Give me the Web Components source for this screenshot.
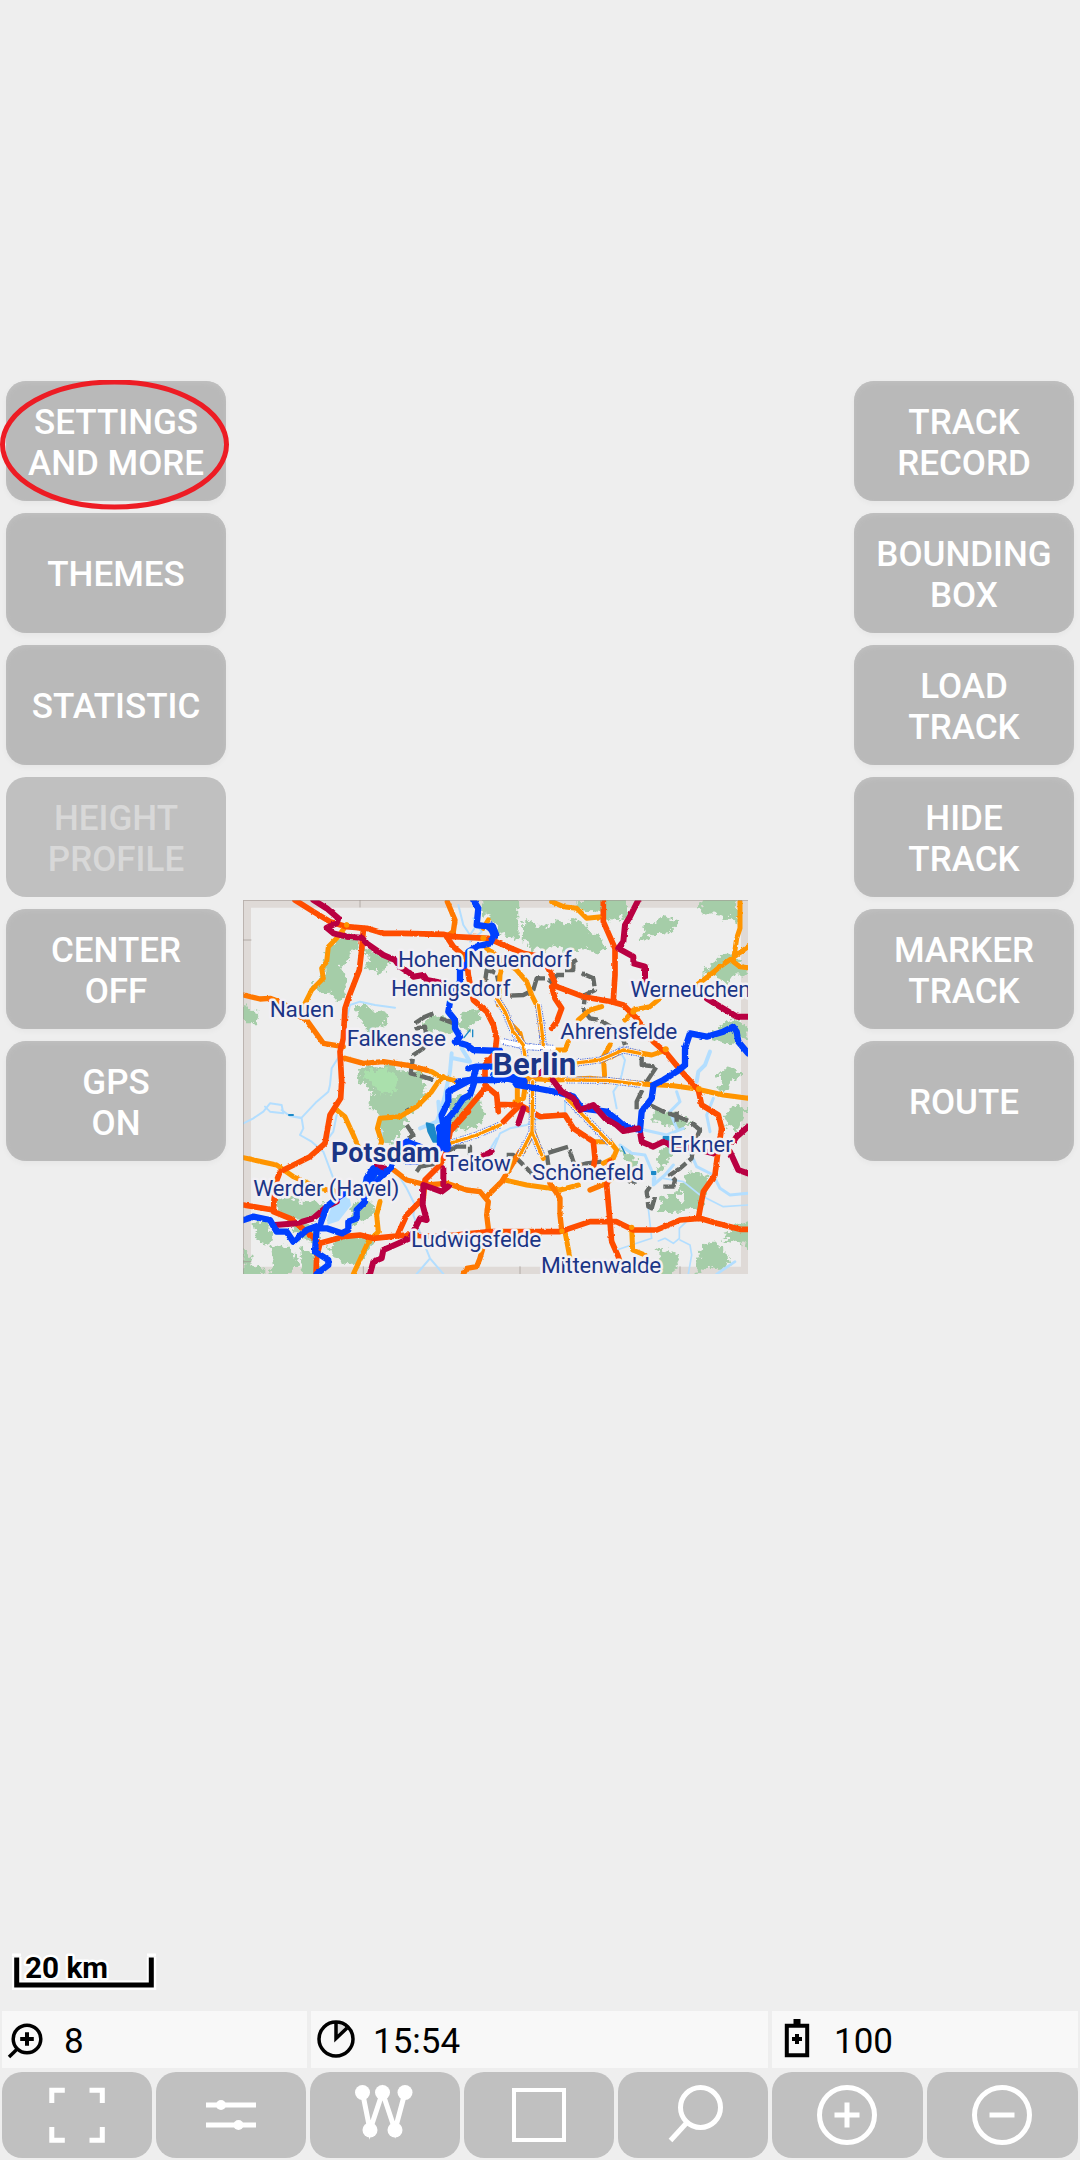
<!DOCTYPE html>
<html lang="en">
<head>
<meta charset="utf-8">
<title>Map</title>
<style>
html,body{margin:0;padding:0;background:#eee}
body{font-family:Roboto,"Liberation Sans",sans-serif}
</style>
</head>
<body>
<map-app></map-app>
<script>
const define = (name, html) => customElements.define(name, class extends HTMLElement {
  constructor() {
    super();
    const t = document.createElement('template');
    t.innerHTML = html;
    this.attachShadow({mode: 'open'}).append(t.content.cloneNode(true));
  }
});

define('side-button', `<style>
:host{display:flex;align-items:center;justify-content:center;box-sizing:border-box;width:220px;height:120px;border-radius:20px;background:#b9b9b9;color:#fff;font-weight:500;font-size:35px;line-height:41px;letter-spacing:0;text-align:center;white-space:pre-line;box-shadow:0 2px 6px rgba(0,0,0,.04),inset 0 2px 5px #c0c0c0;padding:3px 0 0 0;position:relative}
:host([disabled]){background:#c0c0c0;color:#d8d8d8;box-shadow:none}
svg{position:absolute;left:-6px;top:-1px;width:230px;height:130px;display:none}
:host([marked]) svg{display:block}
</style><slot></slot><svg viewBox="0 0 230 130"><ellipse cx="114.5" cy="64.5" rx="112" ry="62.5" fill="none" stroke="#ed1c24" stroke-width="5"/></svg>`);

define('button-column', `<style>:host{display:flex;flex-direction:column;gap:12px}</style><slot></slot>`);

define('info-cell', `<style>
:host{display:flex;align-items:center;height:57px;background:#f8f8f8;color:#000;font-size:35px;line-height:57px;flex:none}
::slotted(svg){width:57px;height:57px;flex:none}
span{margin-left:var(--gap,5px);padding-top:3px}
</style><slot name="icon"></slot><span><slot></slot></span>`);

define('tool-button', `<style>
:host{display:flex;width:150px;height:86px;border-radius:20px;background:#c0c0c0;flex:none}
:host([wide]){width:151px}
::slotted(svg){width:150px;height:86px}
</style><slot></slot>`);

define('scale-bar', `<style>:host{display:block;width:146px;height:38px;margin-left:11px}svg{display:block;overflow:visible}
text{font:700 30px Roboto,sans-serif;paint-order:stroke;stroke:#fff;stroke-width:5px;stroke-linejoin:round}</style>
<svg width="146" height="38" viewBox="11 1953 146 38"><path d="M16.7 1957v28.2H151.500V1957" fill="none" stroke="#fff" stroke-width="9.500" /><path d="M12 1955h9M147 1955h9" stroke="#fff" stroke-width="3"/><path d="M16.700 1957.500v27.500H151.300V1957.500" fill="none" stroke="#000" stroke-width="5"/><text x="25" y="1978" textLength="83" lengthAdjust="spacingAndGlyphs">20 km</text></svg>`);

define('berlin-map', `<style>
:host{display:block;width:505px;height:374px}
svg{display:block;width:505px;height:374px}
path{fill:none;stroke-linecap:round;stroke-linejoin:round}
.g path{fill:#a5cda8}.g .l{fill:#aae0ac}
.w path{stroke:#b3deff;stroke-width:6}.w .f{fill:#b3deff}.w .wide{stroke-width:12}.w .deep{stroke:#1d8ac8;fill:#1d8ac8;stroke-width:6}
.b path{stroke:#656966;stroke-width:13;stroke-dasharray:62 11;stroke-linecap:butt}
.o path{stroke:#ff9500;stroke-width:15}
.p path{stroke:#ff7800;stroke-width:16}
.r path{stroke:#ff4d00;stroke-width:17}
.m path{stroke:#b90042;stroke-width:18}
.u path{stroke:#0340ff;stroke-width:19}
.c path{stroke:#fff;stroke-width:16}.c .i{stroke:#5274e2;stroke-width:21;stroke-dasharray:4 3;stroke-linecap:butt}.c .j{stroke:#fff;stroke-width:15}.c .k{stroke:#ff9500;stroke-width:10}
text{font-family:Roboto,sans-serif;font-size:68px;fill:#1b3586;paint-order:stroke;stroke:#f2f0f4;stroke-width:15px;stroke-linejoin:round}
.B{font-weight:700}
</style>
<svg viewBox="9 15 1515 1122">
<defs><filter id="rg" x="0" y="0" width="1" height="1"><feTurbulence type="fractalNoise" baseFrequency=".06" numOctaves="3" seed="4"/><feDisplacementMap in="SourceGraphic" scale="34" xChannelSelector="R" yChannelSelector="G"/></filter>
<filter id="rr" x="0" y="0" width="1" height="1"><feTurbulence type="fractalNoise" baseFrequency=".1" numOctaves="1" seed="8"/><feDisplacementMap in="SourceGraphic" scale="8" xChannelSelector="R" yChannelSelector="G"/></filter></defs>
<rect x="9" y="15" width="1515" height="1122" fill="#eee"/>
<path d="M9 15H1524V38H33V1115H9ZM1503 38h21V1137H9V1115H1503Z" style="fill:#dfdad7"/>
<g class="g" filter="url(#rg)">
<path d="M290 140 320 112 355 125 362 160 330 165 326 200 300 215 322 250 312 290 322 310 290 320 265 290 235 292 210 280 215 265 242 262 250 240 250 200 265 160Z"/>
<path d="M368 150 455 195 440 215 420 242 400 225 375 218 388 190Z"/>
<path d="M5 325 35 345 55 355 50 385 25 385 5 370Z"/>
<path d="M345 330 380 330 400 350 430 345 440 365 435 390 410 400 405 425 375 395 355 370Z"/>
<path d="M545 390 580 360 640 375 650 400 625 420 590 405 575 415 550 400ZM655 385 668 352 720 340 725 370 690 395 690 410 665 400Z"/>
<path d="M352 535 380 510 430 518 450 500 480 530 545 525 555 600 535 630 500 660 492 700 450 750 420 730 415 660 385 630 400 590 360 560Z"/>
<path class="l" d="M365 545 385 525 440 525 475 545 470 585 440 600 410 590 400 570Z"/>
<path d="M625 620 660 600 720 612 730 650 725 685 690 702 635 705 625 675Z"/>
<path d="M725 5 834 5 836 130 800 125 780 112 765 100 765 75 730 60Z"/>
<path d="M850 70 880 85 920 100 945 75 985 85 1015 70 1050 110 1085 130 1097 165 1060 170 1020 155 1000 180 970 175 960 150 915 170 885 160 870 175 870 150 848 140Z"/>
<path d="M1050 5 1165 5 1155 65 1130 78 1100 75 1090 55 1030 45 1000 30Z"/>
<path d="M1187 140 1205 115 1220 85 1240 90 1270 65 1315 75 1300 100 1285 115 1240 118 1220 135Z"/>
<path d="M1390 5 1490 5 1492 85 1470 65 1450 80 1445 60 1415 55 1390 60 1380 40Z"/>
<path d="M1390 240 1395 220 1430 200 1440 180 1480 178 1520 220 1524 240 1490 235 1470 265 1440 255 1410 235Z"/>
<path d="M1395 425 1430 405 1475 370 1520 390 1524 430 1460 445Z"/>
<path d="M1430 540 1465 510 1505 535 1470 565 1465 590 1435 595 1445 560Z"/>
<path d="M1242 640 1300 655 1355 680 1330 705 1240 680ZM1450 670 1475 640 1505 632 1522 645 1500 690 1485 710 1460 690Z"/>
<path d="M1250 810 1255 780 1290 735 1320 740 1290 795 1260 830ZM1135 760 1170 775 1200 810 1195 840 1170 810Z"/>
<path fill-rule="evenodd" d="M1250 952 1265 910 1320 880 1340 835 1370 830 1405 850 1390 940 1320 950ZM1310 905 1325 890 1335 915 1322 925Z"/>
<path d="M1448 1030 1480 990 1534 980 1534 1055ZM1250 1060 1290 1070 1320 1085 1310 1110 1290 1145 1245 1145 1260 1100ZM1365 1145 1375 1090 1390 1050 1420 1040 1465 1080 1470 1110 1440 1125 1410 1115Z"/>
<path d="M100 915 140 905 185 920 250 925 265 960 220 980 160 975 120 960ZM150 990 180 985 240 1000 230 1045 185 1030ZM40 980 80 980 100 1020 90 1050 50 1035Z"/>
<path d="M10 1055 30 1080 35 1110 70 1120 70 1145 10 1145ZM90 1055 145 1055 175 1090 160 1120 140 1145 85 1145 100 1110Z"/>
<path d="M345 920 400 920 405 950 380 975 340 990 330 960ZM265 1060 310 1025 395 1020 400 1050 370 1080 350 1115 320 1110 280 1085ZM180 1060 220 1080 250 1145 190 1145Z"/>
<path d="M1435 570 1460 570 1460 590 1435 590Z"/>
</g>
<g class="w">
<path d="M10 685 40 670 70 650 90 625 125 630 130 655 90 650 75 635M125 645 150 663 185 668 230 620 265 590 270 570M150 663 185 670 190 700 180 720 215 740 250 770 265 810 280 850 300 870M270 570 275 520 300 480 325 350 330 330 360 320 405 330 465 338M290 660 280 710 250 750M425 705 425 735"/>
<path d="M655 30 670 90 690 120 710 90 710 60M700 70 725 110 690 140"/>
<path class="wide" d="M635 475 630 530 615 600 605 640 590 680 540 700M640 490 690 500 665 460M595 620 600 680"/>
<path class="f" d="M265 970 285 915 325 905 330 930 295 975 265 985Z"/>
<path d="M475 840 500 880 525 930 520 960 550 1040 570 1090 530 1137M570 1090 610 1137M770 730 740 780"/>
<path d="M760 765 780 715 810 700 860 690 880 675 975 655 975 620M1130 640 1120 590 1140 560M1135 460 1155 495 1145 540 1135 570"/>
<path class="wide" d="M1410 470 1395 510 1375 530 1370 560"/>
<path d="M1140 750 1175 775 1215 780 1245 850 1240 870 1275 840 1300 810M1350 770 1370 815 1420 840 1440 880 1470 900 1524 895M1240 850 1240 870M1190 700 1280 720 1330 700M1310 700 1290 650 1320 620 1310 590M1410 710 1400 660 1420 610" style="stroke-width:9"/>
<path d="M1270 850 1330 860 1380 900 1450 935 1524 930M1225 940 1235 1030 1190 1045 1130 1065M1255 1038 1275 1030 1300 1045 1318 1030 1318 1000 1350 970M1320 1035 1350 1050 1355 1080 1345 1137" style="stroke-width:5"/>
<path d="M1485 1100 1430 1137" style="stroke-width:8"/>
<path class="deep" d="M560 685 580 690 592 740 580 740 565 710ZM147 660h12M380 850 400 830 410 845 385 865Z"/><path class="deep" style="stroke-width:4" d="M672 428 690 405M698 425v-20M1145 755l10 20M1235 830h12v8h-12ZM1270 725h18v12h-18Z"/>
</g>
<g filter="url(#rr)">
<g class="b">
<path d="M580 355 555 365 525 385 530 400 555 395 560 430 550 460 520 480 512 535 550 545 580 555M600 370 640 385 655 370M735 260 740 225 770 235 775 260M810 302 850 300 880 285 890 250 920 250 935 262 950 240 975 240M975 225 1000 225 1000 200 1020 190M1025 235 1060 250 1065 285 1035 300 1030 345 1050 370 1080 375 1120 400 1145 420 1155 450M1205 485 1205 510 1250 515 1230 545 1210 575"/>
<path d="M1207 585 1190 620 1190 645M1220 625 1270 650 1315 665 1350 680 1380 705 1360 750 1355 790 1320 820 1290 840 1305 855 1300 875 1270 875M1245 905 1235 940 1225 935 1220 890 1230 875M1190 860 1170 860 1150 840M1085 800 1040 805 1005 815 985 755 920 775 925 810M510 655 500 640M500 690 520 720 505 730M620 770 650 755 690 755 690 780M530 830 540 815 590 805M800 780 820 780 850 810 880 840M1310 650 1310 680"/>
</g>
<g class="o">
<path d="M320 90 290 130 265 155 260 200 245 220 250 250 215 285 195 325 200 365M10 788 110 810 160 845 240 880 290 890M290 645 315 665 340 720 355 755M415 770 425 740 412 700 420 670 480 665 530 635 575 590 595 560 610 545M420 920 410 960 415 1010 385 1040 340 1137"/>
<path d="M515 515 575 530 600 545 655 560M730 100 745 75M740 160 790 200 780 240 775 330M755 170 830 225 860 260 875 300 895 340 905 420 910 460M770 310 795 345 810 385 840 415 850 455M915 460 930 465 975 465 985 440M935 20 970 35 1010 40 1040 70 1085 65M1500 20 1500 100 1490 130 1485 165 1480 200 1500 215 1524 218M1524 155 1490 180 1440 215 1410 240 1370 270M1260 310 1230 335 1180 345 1155 375M1085 335 1050 345 1015 375M850 550 950 555 1050 550 1150 560 1240 570M832 570 832 620M858 560 850 610 825 620M875 555 878 700 870 730 850 770M880 710 910 790M1060 740 1110 740 1130 765 1120 790 1090 805M1000 505 1080 495 1115 485 1150 465 1235 480 1280 465M1110 450 1090 485 1095 560M795 855 860 870 930 880 960 885 1015 870M975 1010 990 1090M1175 1000 1178 1065 1215 1080"/>
<path d="M1220 568 1300 572 1370 582 1450 600 1524 610"/>
</g>
<g class="p"><path d="M10 300 60 312 90 310 130 325 170 360 200 375 250 445 310 455M315 490 370 505 430 500 510 512 560 525M622 20 645 75 640 110 620 125M455 820 500 855 560 870 620 865 680 885 720 890 745 920 740 960 745 1000 720 1090 710 1115 680 1120 670 1137M930 865 960 910 960 960 965 1005M840 770 785 860 745 900M1050 885 1100 865 1120 845"/></g>
<g class="r">
<path d="M165 15 220 50 270 80 320 95 380 100 430 115 490 115 610 118 640 125 745 130 790 150 850 175 905 185 930 230 950 275 1030 305 1115 320 1150 330 1190 370 1240 440 1280 475 1325 530 1375 585 1385 630 1435 660 1445 700 1435 760 1425 840 1390 890 1375 970"/>
<path d="M370 105 365 165 358 225 325 310 315 340 310 430 300 470 305 560 302 610 270 660 255 745 210 785 120 830 105 870 100 950 150 970 200 1010 240 1045 230 1085 228 1137M10 930 100 945M240 1045 310 1025 360 1020 400 1030 500 1020 600 1025 750 1010 960 1010 1050 980 1130 980 1180 1005 1250 1005 1320 975 1380 970 1430 985 1500 1003 1524 1003"/>
<path d="M620 125 640 155 680 190 685 240 700 315 740 350 760 390 770 430 765 475 735 510 735 570M685 650 630 710 620 770 600 810 555 855 550 910 500 960 475 1015M1090 15 1090 80 1125 160 1125 240 1120 315M935 275 945 310 965 340 950 380 935 400M740 575 685 640 630 705M740 575 770 600 775 650 M775 628 840 630 900 665 975 660 1000 700 1060 740 1065 790 1060 820M835 635 790 680M1110 800 1100 870 1110 980 1115 1040 1135 1085 1145 1120M740 495 830 510"/>
</g>
<g class="c"><path class="i" d="M855 485 850 450 820 410 795 350 770 310M910 450 905 400 895 330M790 440 860 455 940 460M1000 505 1080 495 1150 465 1200 475M980 555 1100 556 1200 568M980 610 1110 745M878 560 876 710 840 780M876 710 905 780M630 745 710 720 780 690"/><path class="j" d="M855 485 850 450 820 410 795 350 770 310M910 450 905 400 895 330M790 440 860 455 940 460M1000 505 1080 495 1150 465 1200 475M980 555 1100 556 1200 568M980 610 1110 745M878 560 876 710 840 780M876 710 905 780M630 745 710 720 780 690"/><path class="k" d="M855 485 850 450 820 410 795 350 770 310M910 450 905 400 895 330M1000 505 1080 495 1150 465 1200 475M980 555 1100 556 1200 568M980 610 1110 745M878 560 876 710 840 780M876 710 905 780M630 745 710 720 780 690"/></g>
<g class="m">
<path d="M220 15 260 40 295 70 290 85 260 98 280 115 320 125 365 128 380 145 430 180 465 195 480 215 510 235 520 245 550 240 560 255 600 262M1195 15 1170 65 1155 90 1150 140 1135 160 1180 185 1180 205 1215 215 1215 255M1400 310 1440 335 1490 365 1524 365"/>
<path d="M105 990 170 985 220 970 260 935 290 920M610 820 610 870 625 875 605 890 550 870 548 930 560 975 540 970 510 1030 430 1065 425 1090 400 1100 390 1137M725 785 755 770M850 640 835 685M1480 740 1490 725 1524 695M1470 770 1495 825 1524 835M410 815 435 820M1200 710 1205 740 1240 755 1270 740 1290 750 1360 760 1420 775"/>
</g>
<g class="u">
<path d="M700 15 715 40 710 90 745 95 765 115 750 145 710 155 685 170 685 200 660 225 660 260 635 290 625 350 645 375 645 400 660 425 645 440 680 450 700 465 780 468M685 520 710 515 760 515M655 560 690 555 770 555 840 545M710 515 700 550 625 590 625 620 605 660 610 690 600 740 620 740 625 670 650 640 670 610 690 600 705 555"/>
<path d="M600 715 600 760M540 755 500 740 480 755M500 800 530 800M10 975 40 965 90 975 110 1010 140 1010 160 1040 200 1005 240 990 260 935 290 910 320 890M420 850 370 900 375 920 350 945 350 970 325 980 325 1005 305 1015 260 1000 230 1000 225 1070 265 1095 265 1110 230 1137M455 815 430 840 400 820 380 850 375 880"/>
<path d="M760 540 820 555 830 570 900 582 955 592 1000 605 1025 640 1100 650 1125 670 1155 695 1200 705 1205 650 1235 610 1240 575M1240 570 1270 555 1310 530 1335 510 1335 460 1350 415 1400 425 1450 410 1480 395 1490 410 1495 440 1524 475"/>
<path d="M600 700 620 760M610 720 620 750M400 835 385 860M755 95 765 120M820 550 850 560" style="stroke-width:26"/>
</g>
<g class="m"><path d="M938 555 965 590 1000 610 1020 645 1060 630 1095 670 1130 690 1150 708 1195 700M885 540 910 530"/></g>
</g>
<g fill="#ff9500"><circle cx="320" cy="90" r="8"/><circle cx="730" cy="130" r="9"/><circle cx="1180" cy="350" r="9"/><circle cx="1277" cy="463" r="9"/><circle cx="1377" cy="582" r="9"/><circle cx="966" cy="1008" r="8"/><circle cx="1175" cy="997" r="8"/></g>
<path d="M10 1137V16H1524M9 135h24M360 16v20M9 1100h24M370 1115v22M840 1115v22M1320 1115v22" style="stroke:#9e9690;stroke-width:2"/>
<text x="474" y="216" textLength="522">Hohen Neuendorf</text>
<text x="453" y="303" textLength="359">Hennigsdorf</text>
<text x="89" y="366" textLength="194">Nauen</text>
<text x="320" y="453" textLength="298">Falkensee</text>
<text x="1171" y="306" textLength="361" >Werneuchen</text>
<text x="961" y="431" textLength="351">Ahrensfelde</text>
<text class="B" x="758" y="540" textLength="251" style="font-size:94px">Berlin</text>
<text class="B" x="273" y="801" textLength="326" style="font-size:81px">Potsdam</text>
<text x="616" y="827" textLength="196">Teltow</text>
<text x="40" y="903" textLength="438">Werder (Havel)</text>
<text x="876" y="856" textLength="336">Schönefeld</text>
<text x="1289" y="770" textLength="190">Erkner</text>
<text x="513" y="1056" textLength="391">Ludwigsfelde</text>
<text x="903" y="1134" textLength="361">Mittenwalde</text>
</svg>`);

define('map-app', `<style>
:host{display:flex;flex-direction:column;width:1080px;height:2160px;background:#eee;overflow:hidden}
main{display:flex;align-items:flex-start;height:1572px;box-sizing:border-box;padding:0 6px;margin-top:381px}
berlin-map{margin:519px auto 0 17px}
scale-bar{flex:none}
.info{display:flex;gap:4px;padding:0 2px;margin-top:20px}
.tools{display:flex;gap:4px;padding:4px 2px 2px}
svg{fill:none;stroke:#fff;stroke-width:5}
.k{stroke:#000;stroke-width:3.500}
</style>
<main>
<button-column>
<side-button marked>SETTINGS
AND MORE</side-button><side-button>THEMES</side-button><side-button>STATISTIC</side-button><side-button disabled>HEIGHT
PROFILE</side-button><side-button>CENTER
OFF</side-button><side-button>GPS
ON</side-button></button-column>
<berlin-map></berlin-map>
<button-column><side-button>TRACK
RECORD</side-button><side-button>BOUNDING
BOX</side-button><side-button>LOAD
TRACK</side-button><side-button>HIDE
TRACK</side-button><side-button>MARKER
TRACK</side-button><side-button>ROUTE</side-button></button-column>
</main>
<scale-bar></scale-bar>
<div class="info">
<info-cell style="width:305px"><svg slot="icon" class="k" viewBox="0 0 57 57"><circle cx="25" cy="28" r="13.800"/><path d="M25 21.200v13.600M18.200 28h13.600" stroke-width="4"/><path d="M15.500 37.800 7 46" stroke-width="3.500"/></svg>8</info-cell>
<info-cell style="width:457px"><svg slot="icon" class="k" viewBox="0 0 57 57"><path d="M25 28V11L36 17Z" fill="#ddd" stroke="none"/><circle cx="25" cy="28" r="17"/><path d="M25 12v15.500L36 17" /></svg>15:54</info-cell>
<info-cell style="width:306px"><svg slot="icon" class="k" viewBox="0 0 57 57"><path d="M14.800 14.800h20.400v29.500H14.800Z" stroke-width="4"/><path d="M21.500 8h7v6h-7Z" fill="#000" stroke="none"/><path d="M25 23v10M20 28h10" stroke-width="4"/></svg>100</info-cell>
</div>
<div class="tools">
<tool-button><svg viewBox="0 0 150 86"><path d="M49.800 31V18.200h13M87.500 18.200h12.800V31M49.800 55v13.200h13M87.500 68.200h12.800V55"/></svg></tool-button>
<tool-button><svg viewBox="0 0 150 86"><path d="M50 33h50M50 53h50"/><circle cx="65" cy="33" r="5" fill="#fff" stroke="none"/><circle cx="82.500" cy="53" r="5" fill="#fff" stroke="none"/></svg></tool-button>
<tool-button><svg viewBox="0 0 150 86"><path d="M52.500 20.500 60 58 72.500 20.500 85 58 95 20.500"/><g fill="#fff" stroke="none"><circle cx="52.500" cy="20.500" r="7.500"/><circle cx="72.500" cy="20.500" r="7.500"/><circle cx="95" cy="20.500" r="7.500"/><circle cx="60" cy="58" r="7.500"/><circle cx="85" cy="58" r="7.500"/></g></svg></tool-button>
<tool-button><svg viewBox="0 0 150 86"><path d="M50 18h50v50H50Z" stroke-width="4"/></svg></tool-button>
<tool-button><svg viewBox="0 0 150 86"><circle cx="82.500" cy="35.500" r="20"/><path d="M68.500 51 52.500 68.500"/></svg></tool-button>
<tool-button wide><svg viewBox="0 0 150 86"><circle cx="75" cy="43" r="27.500"/><path d="M75 30.500v25M62.500 43h25"/></svg></tool-button>
<tool-button wide><svg viewBox="0 0 150 86"><circle cx="75" cy="43" r="27.500"/><path d="M62.500 43h25"/></svg></tool-button>
</div>`);
</script>
</body>
</html>
